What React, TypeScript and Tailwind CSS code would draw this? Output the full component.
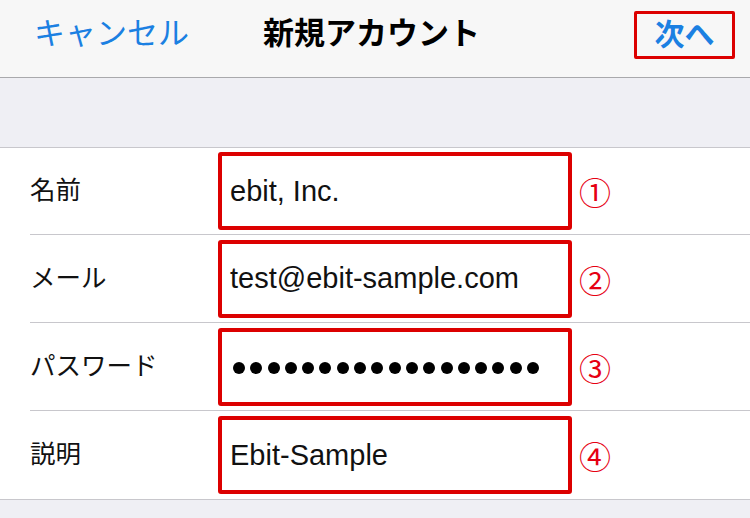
const rows = [
  { label: '名前', value: 'ebit, Inc.', num: '①' },
  { label: 'メール', value: 'test@ebit-sample.com', num: '②' },
  { label: 'パスワード', value: '', num: '③', secret: 18 },
  { label: '説明', value: 'Ebit-Sample', num: '④' },
];

const jp = "font-['Liberation_Sans','Noto_Sans_CJK_JP',sans-serif]";

export default function App() {
  return (
    <div className={`w-[750px] h-[518px] overflow-hidden bg-[#efeff4] flex flex-col ${jp}`}>
      {/* ナビゲーションバー */}
      <div className="h-[78px] shrink-0 bg-[#f7f7f7] border-b border-[#a9a9ac] relative flex items-center pb-[10px]">
        <span className="ml-[34px] text-[31px] text-[#1b80e2] leading-none">キャンセル</span>
        <span className="ml-[74px] text-[31px] font-bold text-black leading-none">新規アカウント</span>
        <div className="ml-auto mr-[15px] mt-[2px] w-[101px] h-[48px] border-[3px] border-[#dc0000] rounded-[2px] flex items-center justify-center">
          <span className="text-[30px] font-bold text-[#1b80e2] leading-none">次へ</span>
        </div>
      </div>

      <div className="h-[69px] shrink-0" />

      {/* フォーム */}
      <div className="bg-white border-t border-b border-[#c8c7cc]">
        {rows.map((r, i) => (
          <div key={r.label} className="pl-[30px]">
            <div className={`h-[87px] flex items-center ${i < rows.length - 1 ? 'border-b border-[#c8c7cc]' : ''} ${i > 0 ? 'h-[88px]' : ''}`}>
              <span className="w-[188px] shrink-0 text-[25.5px] text-[#111] leading-none">{r.label}</span>
              <div className="w-[354px] h-[78px] shrink-0 border-[4px] border-[#dc0000] rounded-[3px] flex items-center pl-[8px]">
                {r.secret ? (
                  <div className="flex gap-[5.3px] pl-[3px] pt-[2px]">
                    {Array.from({ length: r.secret }).map((_, k) => (
                      <div key={k} className="w-[12px] h-[12px] rounded-full bg-black" />
                    ))}
                  </div>
                ) : (
                  <span className="text-[29px] text-[#111] leading-none">{r.value}</span>
                )}
              </div>
              <span className="ml-[7px] text-[32px] text-[#e60012] leading-none font-['Noto_Sans_CJK_JP',sans-serif]">{r.num}</span>
            </div>
          </div>
        ))}
      </div>
    </div>
  );
}
